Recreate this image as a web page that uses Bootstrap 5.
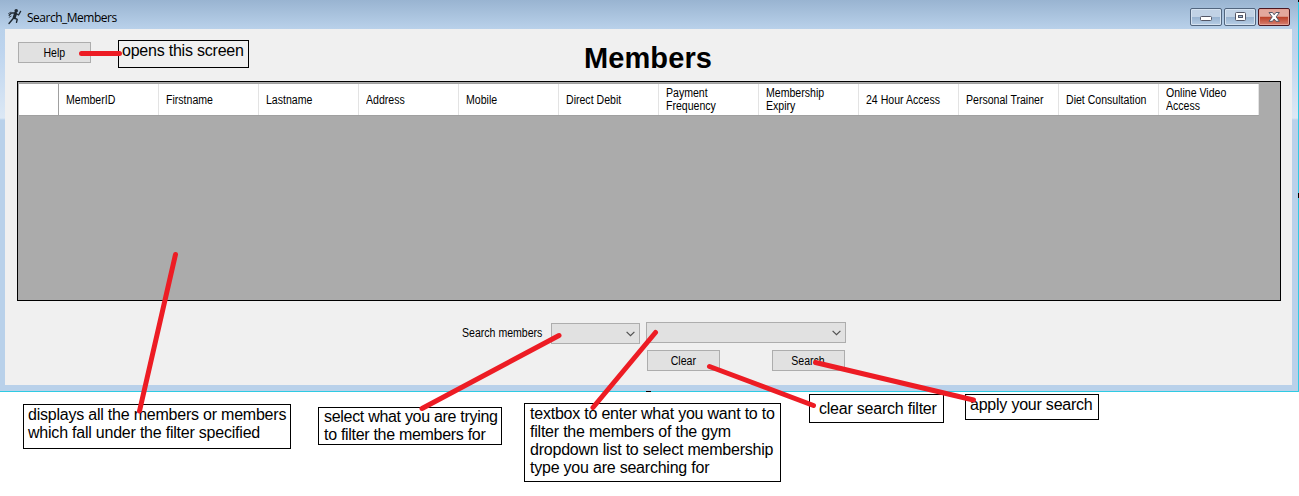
<!DOCTYPE html>
<html lang="en">
<head>
<meta charset="utf-8">
<meta name="viewport" content="width=device-width, initial-scale=1">
<title>Search_Members</title>
<link href="https://cdn.jsdelivr.net/npm/bootstrap@5.3.0/dist/css/bootstrap.min.css" rel="stylesheet">
<style>
body{background:#fff;color:#000;font-family:"Liberation Sans",Arial,sans-serif;font-size:12px;line-height:13px}
.stage{width:1299px;height:496px}
.app-window{height:392px;padding:0 6px 6px 5px;border-right:1px solid #2fcbe3;border-bottom:1px solid #2fcbe3;
 background:linear-gradient(#99b4d1 0,#b9d1ea 29px,#bdd4ee 50px,#dce8f5 118px,#b9d1ea 120px)}
.title-bar{height:29px;flex:none;padding:6px 2px 0 2px}
.title-text{font:12px/16px "Open Sans","Noto Sans",sans-serif;letter-spacing:-.5px;margin:4px 0 0 3px}
.win-buttons{gap:2px;margin-top:2px}
.win-btn{width:32px;height:18px;padding:0;border:1px solid #52667f;border-radius:2px;box-shadow:inset 0 0 0 1px #d5e2f0;background:linear-gradient(#c1d2e5 48%,#98b3d0 52%,#b8cee6);display:flex;align-items:center;justify-content:center}
.win-close{border-color:#4b1822;box-shadow:inset 0 0 0 1px #e5a195;background:linear-gradient(#e3a79c 46%,#ba3f27 50%,#d68072)}
.client{background:#f0f0f0;padding:0 12px}
.client-head{height:52px;display:grid;grid-template-columns:1fr auto 1fr;padding-top:13px}
.help-cell{padding-left:1px}
.form-btn{width:73px;height:21px;padding:1px 0 0;border:1px solid #adadad;border-radius:0;background:#e1e1e1;color:#000;font-size:12px;line-height:18px}
.form-btn span,.col-head span,.filter-label span{display:inline-block;transform:scaleX(.88);white-space:nowrap}
.col-head span,.filter-label span{transform-origin:left}
.heading{font-size:29px;line-height:32px;font-weight:700;margin:0 1px 0 0;letter-spacing:.12px}
.data-grid{height:220px;border:1px solid #000;background:#ababab;padding:1px 0 0 1px;margin-right:-1px}
.head-row{height:33px;border-bottom:1px solid #a0a0a0;border-top:1px solid #a0a0a0;width:1240px;background:#fff}
.row-head{width:40px;border-right:1px solid #a0a0a0}
.col-head{width:100px;border-right:1px solid #e3e3e3;padding:1px 0 0 7px}
.filters{margin-top:21px;padding-left:445px;height:22px;gap:6px}
.filter-label{width:83px;margin-top:5px}
.combo{height:21px;border:1px solid #adadad;background:#e1e1e1;padding-right:4px}
.actions{margin-top:6px;padding-left:630px;gap:52px}
.note-box{position:absolute;border:1px solid #000;font-size:16px;letter-spacing:-.22px;line-height:18px;white-space:nowrap;margin:0}
.on-white{background:#fff}
.marks{position:absolute;left:0;top:0;pointer-events:none}
</style>
</head>
<body>
<div class="stage position-relative overflow-hidden">
 <main class="app-window d-flex flex-column">
  <header class="title-bar d-flex align-items-start">
   <svg width="17" height="19" viewBox="0 0 17 19" fill="none" stroke="#202a33" stroke-linecap="round" stroke-linejoin="round">
    <circle cx="9.2" cy="4.7" r="1.8" fill="#202a33" stroke="none"/>
    <path d="M8.6 7.4 7.2 11.6" stroke-width="3.1"/><path d="M8 7 4.5 7 2.2 9.3M9.5 7.8 11.6 9 13.6 5.4" stroke-width="1.3"/>
    <path d="M7.4 12 10.2 13.4 9.5 16.3M6.6 12 4.5 14.5 2 17.5" stroke-width="1.4"/>
    <path d="M1.6 7.5 3.8 6.2M2.2 11.2 4.1 10.2" stroke-width=".8"/>
   </svg>
   <span class="title-text">Search_Members</span>
   <div class="win-buttons ms-auto d-flex">
    <button class="win-btn" aria-label="Minimize"><svg width="14" height="12"><rect x="1.5" y="5.5" width="11" height="4" rx="1" fill="#fff" stroke="#535666"/></svg></button>
    <button class="win-btn" aria-label="Maximize"><svg width="14" height="12"><rect x="2.5" y="1.5" width="10" height="8" rx="1" fill="#fff" stroke="#535666"/><rect x="5.5" y="4.5" width="4" height="2" fill="#9db9d6" stroke="#535666"/></svg></button>
    <button class="win-btn win-close" aria-label="Close"><svg width="14" height="12"><path d="M2 1.500H5.500L7.200 3.800 8.900 1.500H12.400L9.200 5.900 12.400 10.300H8.900L7.200 8 5.500 10.300H2L5.200 5.900z" fill="#fff" stroke="#535666"/></svg></button>
   </div>
  </header>
  <section class="client flex-grow-1">
   <div class="client-head">
    <div class="help-cell"><button class="btn form-btn d-block"><span>Help</span></button></div>
    <h1 class="heading">Members</h1>
   </div>
   <div class="data-grid">
    <div class="head-row d-flex">
     <div class="row-head"></div>
     <div class="col-head d-flex align-items-center"><span>MemberID</span></div>
     <div class="col-head d-flex align-items-center"><span>Firstname</span></div>
     <div class="col-head d-flex align-items-center"><span>Lastname</span></div>
     <div class="col-head d-flex align-items-center"><span>Address</span></div>
     <div class="col-head d-flex align-items-center"><span>Mobile</span></div>
     <div class="col-head d-flex align-items-center"><span>Direct Debit</span></div>
     <div class="col-head d-flex align-items-center"><span>Payment<br>Frequency</span></div>
     <div class="col-head d-flex align-items-center"><span>Membership<br>Expiry</span></div>
     <div class="col-head d-flex align-items-center"><span>24 Hour Access</span></div>
     <div class="col-head d-flex align-items-center"><span>Personal Trainer</span></div>
     <div class="col-head d-flex align-items-center"><span>Diet Consultation</span></div>
     <div class="col-head d-flex align-items-center"><span>Online Video<br>Access</span></div>
    </div>
   </div>
   <div class="filters d-flex">
    <label class="filter-label"><span>Search members</span></label>
    <div class="combo d-flex align-items-center justify-content-end mt-auto" style="width:89px"><svg width="9" height="6" fill="none" stroke="#505050" stroke-width="1.2"><path d="M.6.8 4.5 4.7 8.4.8"/></svg></div>
    <div class="combo d-flex align-items-center justify-content-end" style="width:200px"><svg width="9" height="6" fill="none" stroke="#505050" stroke-width="1.2"><path d="M.6.8 4.5 4.7 8.4.8"/></svg></div>
   </div>
   <div class="actions d-flex">
    <button class="btn form-btn"><span>Clear</span></button>
    <button class="btn form-btn"><span>Search</span></button>
   </div>
  </section>
 </main>

 <!-- Callouts laid over the window -->
 <p class="note-box" style="left:118px;top:40px;width:131px;height:28px;padding:1px 0 0 3px">opens this screen</p>
 <p class="note-box on-white" style="left:23px;top:404px;width:268px;height:45px;padding:1px 0 0 4px">displays all the members or members<br>which fall under the filter specified</p>
 <p class="note-box on-white" style="left:318px;top:407px;width:184px;height:38px;padding:0 0 0 5px;letter-spacing:-.3px">select what you are trying<br>to filter the members for</p>
 <p class="note-box on-white" style="left:524px;top:403px;width:257px;height:79px;padding:1px 0 0 5px">textbox to enter what you want to to<br>filter the members of the gym<br>dropdown list to select membership<br>type you are searching for</p>
 <p class="note-box on-white" style="left:809px;top:394px;width:135px;height:29px;padding:5px 0 0 9px">clear search filter</p>
 <p class="note-box on-white" style="left:965px;top:394px;width:134px;height:26px;padding:1px 0 0 4px">apply your search</p>
 <svg class="marks" width="1299" height="496" fill="none">
  <path d="M81.5 53.5H119.5M175.5 254.5 139.5 411M559 335.5 422 408.5M655.5 332.5 593 407.5M709.5 366.5 813.5 405.5M815.5 362.5 973.5 400" stroke="#ed1c24" stroke-width="5" stroke-linecap="round"/>
  <path d="M646 391.5H651M1298.5 193V198M1298.5 0V2" stroke="#000"/>
 </svg>
</div>
<script src="https://cdn.jsdelivr.net/npm/bootstrap@5.3.0/dist/js/bootstrap.bundle.min.js"></script>
</body>
</html>
